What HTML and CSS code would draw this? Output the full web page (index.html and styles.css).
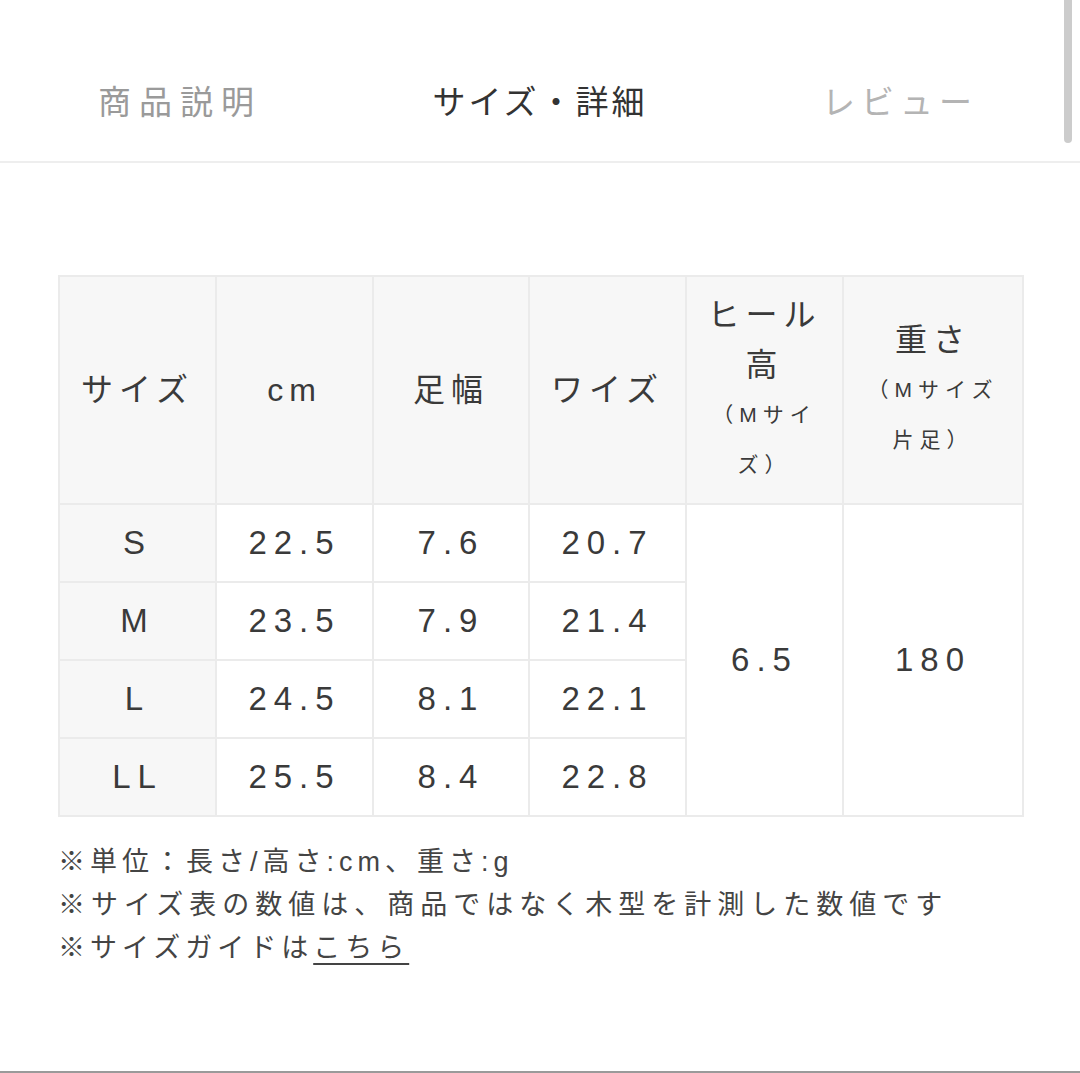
FILE: index.html
```html
<!DOCTYPE html>
<html lang="ja">
<head>
<meta charset="utf-8">
<link rel="stylesheet" href="styles.css">
</head>
<body>
<div class="page">
  <nav class="tabs">
    <div class="tab">商品説明</div>
    <div class="tab active">サイズ・詳細</div>
    <div class="tab light">レビュー</div>
  </nav>
  <div class="scrollbar"></div>
  <main class="content">
    <table class="size-table">
      <colgroup>
        <col class="c157"><col class="c157"><col class="c156"><col class="c157"><col class="c157"><col class="c180">
      </colgroup>
      <thead>
        <tr class="head-row">
          <th>サイズ</th>
          <th>cm</th>
          <th>足幅</th>
          <th>ワイズ</th>
          <th>ヒール<br>高<span class="sub">（Mサイ<br>ズ）</span></th>
          <th>重さ<span class="sub">（Mサイズ<br>片足）</span></th>
        </tr>
      </thead>
      <tbody>
        <tr><th class="size">S</th><td>22.5</td><td>7.6</td><td>20.7</td><td rowspan="4">6.5</td><td rowspan="4">180</td></tr>
        <tr><th class="size">M</th><td>23.5</td><td>7.9</td><td>21.4</td></tr>
        <tr><th class="size">L</th><td>24.5</td><td>8.1</td><td>22.1</td></tr>
        <tr><th class="size">LL</th><td>25.5</td><td>8.4</td><td>22.8</td></tr>
      </tbody>
    </table>
    <div class="notes">
      <p class="note-short">※単位：長さ/高さ:cm、重さ:g</p>
      <p>※サイズ表の数値は、商品ではなく木型を計測した数値です</p>
      <p class="note-short">※サイズガイドは<a class="link" href="#">こちら</a></p>
    </div>
  </main>
</div>
</body>
</html>
```
FILE: styles.css
```css
html, body {
  margin: 0;
  padding: 0;
  background: #fff;
}
body {
  font-family: "Liberation Sans", "Noto Sans CJK JP", sans-serif;
  color: #3a3a3a;
}
.page {
  position: relative;
  height: 1073px;
  box-sizing: border-box;
  border-bottom: 2px solid #9a9a9a;
  overflow: hidden;
}
.tabs {
  display: flex;
  height: 163px;
  border-bottom: 2px solid #eeeeee;
  box-sizing: border-box;
}
.tab {
  flex: 1;
  display: flex;
  align-items: center;
  justify-content: center;
  padding-top: 38px;
  font-size: 33px;
  letter-spacing: 8px;
  color: #9a9a9a;
}
.tab.active {
  color: #333;
  letter-spacing: 3px;
}
.tab.light {
  color: #b4b4b4;
  letter-spacing: 6px;
}
.scrollbar {
  position: absolute;
  top: 0;
  left: 1064px;
  width: 8px;
  height: 143px;
  border-radius: 0 0 4px 4px;
  background: #cccccc;
}
.content {
  padding: 112px 58px 0;
}
.size-table {
  width: 964px;
  table-layout: fixed;
  border-collapse: collapse;
  border: 2px solid #ebebeb;
}
.c157 { width: 157px; }
.c156 { width: 156px; }
.c180 { width: 180px; }
.size-table th,
.size-table td {
  border: 2px solid #ebebeb;
  padding: 0;
  text-align: center;
  vertical-align: middle;
  font-weight: normal;
  color: #3a3a3a;
}
.head-row {
  height: 228px;
}
.head-row th {
  background: #f7f7f7;
  font-size: 32px;
  line-height: 50px;
  letter-spacing: 6px;
}
.sub {
  display: block;
  font-size: 21px;
  line-height: 50px;
  letter-spacing: 6px;
}
.size-table tbody tr {
  height: 78px;
}
.size-table tbody td,
.size-table tbody th {
  font-size: 33px;
  letter-spacing: 7px;
}
.size-table tbody th.size {
  background: #f7f7f7;
}
.notes {
  margin-top: 24px;
}
.notes p {
  margin: 0;
  font-size: 27px;
  line-height: 43px;
  letter-spacing: 6px;
  color: #444;
}
.notes p.note-short {
  letter-spacing: 5px;
}
.link {
  color: #444;
  text-decoration: underline;
  text-decoration-thickness: 2px;
  text-underline-offset: 6px;
}
```
